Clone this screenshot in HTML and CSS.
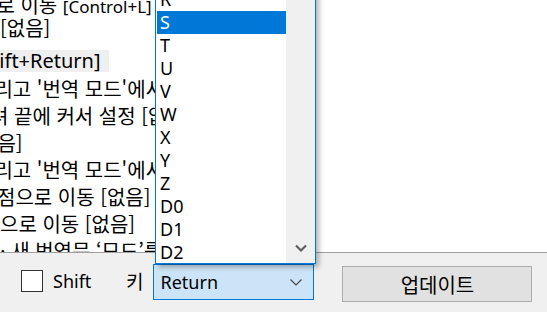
FILE: index.html
```html
<!DOCTYPE html>
<html lang="ko">
<head>
    <meta charset="UTF-8">
    <title>단축키 설정</title>
    <link rel="stylesheet" href="styles.css">
</head>
<body>
    <div class="window">
        <div class="list">
            <div class="line short first"><span class="cut cut-a">으로 이동 <span class="latin">[Control+L]</span></span></div>
            <div class="line short"><span>[없음]</span></div>
            <div class="line sel"><span class="cut cut-b">Shift+Return]</span></div>
            <div class="line"><span class="cut cut-c">그리고 '번역 모드'에서 원문 편집</span></div>
            <div class="line"><span class="cut cut-d">려 끝에 커서 설정 [없음]</span></div>
            <div class="line"><span class="cut cut-e">없음]</span></div>
            <div class="line"><span class="cut cut-c">그리고 '번역 모드'에서 원문 편집</span></div>
            <div class="line"><span class="cut cut-f">점으로 이동 [없음]</span></div>
            <div class="line"><span>으로 이동 [없음]</span></div>
            <div class="line"><span>· 새 번역문 ‘모드’를 추가 [없음]</span></div>
        </div>

        <div class="bar">
            <label class="check">
                <span class="box"></span>
                <span>Shift</span>
            </label>
            <span class="key-label">키</span>
            <div class="combo">
                <span>Return</span>
                <svg class="combo-arrow" width="12" height="7" viewBox="0 0 12 7">
                    <path d="M0.5 0.5 L6 6 L11.5 0.5" fill="none" stroke="#444" stroke-width="1.1"/>
                </svg>
            </div>
            <button class="update">업데이트</button>
        </div>

        <div class="popup">
            <div class="items">
                <div class="item">R</div>
                <div class="item active">S</div>
                <div class="item">T</div>
                <div class="item">U</div>
                <div class="item">V</div>
                <div class="item">W</div>
                <div class="item">X</div>
                <div class="item">Y</div>
                <div class="item">Z</div>
                <div class="item">D0</div>
                <div class="item">D1</div>
                <div class="item">D2</div>
            </div>
            <div class="scrollbar">
                <svg class="scroll-down" width="12" height="8" viewBox="0 0 12 8">
                    <path d="M1 1.5 L6 6.5 L11 1.5" fill="none" stroke="#606060" stroke-width="2.2"/>
                </svg>
            </div>
        </div>
    </div>
</body>
</html>
```

FILE: styles.css
```css
body {
    margin: 0;
    padding: 0;
    background-color: #f0f0f0;
    font-family: "Noto Sans", "Noto Sans CJK KR", sans-serif;
    font-size: 18px;
    color: #000;
    overflow: hidden;
}

.window {
    position: relative;
    width: 547px;
    height: 312px;
    overflow: hidden;
}

/* key list (scrolled sideways, so lines start cut off) */
.list {
    height: 252px;
    background-color: #fff;
    border-bottom: 1px solid #a0a0a0;
    overflow: hidden;
    white-space: nowrap;
    font-family: "Noto Sans CJK KR", sans-serif;
    font-size: 20px;
}

.line {
    height: 27px;
    line-height: 27px;
    overflow: hidden;
}

.line.short {
    height: 23px;
    line-height: 23px;
}

.line.first {
    margin-top: -7px;
}

.line.sel {
    margin-top: 9px;
}

.line.sel span {
    display: inline-block;
    line-height: 22px;
    margin-top: 2px;
    vertical-align: top;
    background-color: #efefef;
    padding-right: 8px;
    font-family: "Noto Sans", sans-serif;
}

.latin {
    font-family: "Noto Sans", sans-serif;
    font-size: 17px;
}

.cut { display: inline-block; }
.cut-a { margin-left: -22px; }
.cut-b { margin-left: -24px; }
.cut-c { margin-left: -24px; }
.cut-d { margin-left: -10px; }
.cut-e { margin-left: -21px; }
.cut-f { margin-left: -3px; }

/* bottom row */
.bar {
    height: 59px;
    display: flex;
    align-items: flex-start;
    padding-left: 21px;
}

.check {
    display: flex;
    align-items: center;
    gap: 10px;
    width: 105px;
    margin-top: 16px;
    height: 24px;
}

.box {
    width: 20px;
    height: 20px;
    border: 1px solid #333;
    background-color: #fff;
}

.key-label {
    margin-top: 16px;
    line-height: 24px;
    font-family: "Noto Sans CJK KR", sans-serif;
    font-size: 19px;
}

.combo {
    box-sizing: border-box;
    width: 161px;
    height: 36px;
    margin-left: 10px;
    margin-top: 11px;
    padding: 0 11px 0 6px;
    border: 1px solid #0078d7;
    background-color: #cce4f7;
    display: flex;
    align-items: center;
    justify-content: space-between;
}

.update {
    box-sizing: border-box;
    width: 190px;
    height: 36px;
    margin-left: 28px;
    margin-top: 13px;
    border: 1px solid #adadad;
    background-color: #e1e1e1;
    font-family: "Noto Sans CJK KR", sans-serif;
    font-size: 20px;
    color: #000;
    padding: 0;
}

/* opened drop-down list of the combo */
.popup {
    position: absolute;
    left: 155px;
    top: -13px;
    width: 161px;
    height: 277px;
    box-sizing: border-box;
    border: 1px solid #0078d7;
    background-color: #fff;
    box-shadow: 3px 3px 5px rgba(0, 0, 0, 0.3);
    display: flex;
}

.items {
    flex-grow: 1;
    overflow: hidden;
    padding-left: 1px;
}

.item {
    height: 23px;
    line-height: 23px;
    padding-left: 3px;
}

.item.active {
    background-color: #0078d7;
    color: #fff;
}

.scrollbar {
    width: 29px;
    background-color: #f0f0f0;
    display: flex;
    flex-direction: column;
    justify-content: flex-end;
    align-items: center;
}

.scroll-down {
    margin-bottom: 11px;
}
```
